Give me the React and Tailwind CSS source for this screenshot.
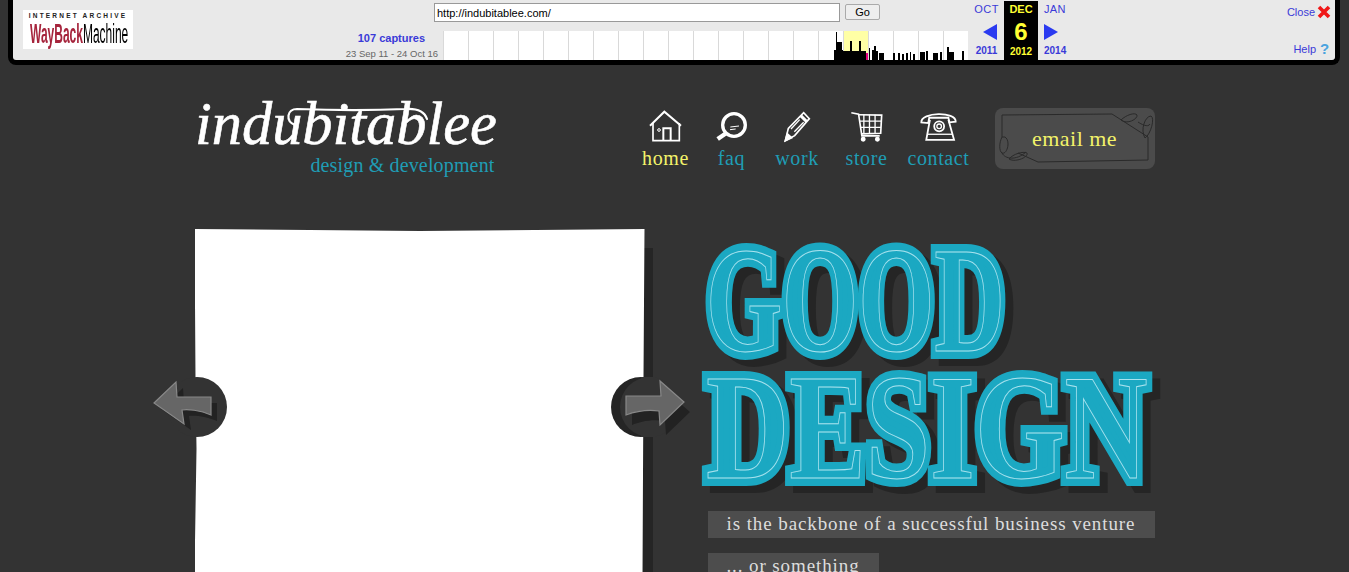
const SANS = "font-['Liberation_Sans',Arial,sans-serif]";

const bars = [
  [834, 3, 50], [836, 1, 32], [837, 5, 42], [842, 1, 50], [843, 7, 51], [850, 2, 41], [852, 7, 51], [859, 2, 41],
  [861, 5, 51], [869, 1, 48], [872, 2, 50], [874, 2, 46], [876, 2, 51], [879, 5, 53], [893, 2, 53], [898, 2, 53],
  [902, 2, 54], [906, 2, 53], [910, 1, 52], [913, 2, 54], [920, 5, 52], [926, 2, 51], [933, 5, 53], [940, 2, 52],
  [947, 2, 47], [949, 5, 52], [962, 2, 51],
];

const navItems = [
  { label: 'home', width: 'w-[66px]', color: 'text-[#f3f36a]', icon: <HomeIcon /> },
  { label: 'faq', width: 'w-[66px]', color: 'text-[#1f9db5]', icon: <FaqIcon /> },
  { label: 'work', width: 'w-[65px]', color: 'text-[#1f9db5]', icon: <WorkIcon /> },
  { label: 'store', width: 'w-[74px]', color: 'text-[#1f9db5]', icon: <StoreIcon /> },
  { label: 'contact', width: 'w-[70px]', color: 'text-[#1f9db5]', icon: <ContactIcon /> },
];

function HomeIcon() {
  return (
    <svg viewBox="54 45 102 99" className="h-[33px] w-[34px]" fill="none" stroke="#fff" strokeWidth="6">
      <path d="M57 92 100 50l50 42" />
      <path d="M66 84v53h79V84" strokeWidth="5" />
      <path d="M97 137v-37h22v37" strokeWidth="6" />
      <circle cx="84" cy="105" r="4" strokeWidth="3" />
    </svg>
  );
}

function FaqIcon() {
  return (
    <svg viewBox="260 45 105 99" className="h-[33px] w-[35px]" fill="none" stroke="#fff">
      <circle cx="320" cy="90" r="34" strokeWidth="10" />
      <path d="M294 116 271 132" strokeWidth="13" />
      <path d="M309 96 335 93M308 104 325 102" strokeWidth="3" />
    </svg>
  );
}

function WorkIcon() {
  return (
    <svg viewBox="465 45 90 99" className="h-[33px] w-[30px]" fill="none" stroke="#fff" strokeWidth="5">
      <path d="M475 137 484 100 530 53 547 71 503 122Z" />
      <path d="M521 62 539 80" strokeWidth="9" />
      <path d="M492 102 518 74M502 110 530 82" strokeWidth="4" />
      <path d="M475 137 481 116 494 128Z" fill="#fff" />
    </svg>
  );
}

function StoreIcon() {
  return (
    <svg viewBox="648 50 100 99" className="h-[33px] w-[33px]" fill="none" stroke="#fff" strokeWidth="5">
      <path d="M652 58 674 62 684 128H738" />
      <path d="M674 64 744 65 741 120 684 122" />
      <path d="M690 64v57M707 64v57M724 64v57M677 83h66M680 102h62" strokeWidth="4" />
      <circle cx="688" cy="138" r="5" fill="#fff" />
      <circle cx="731" cy="138" r="5" fill="#fff" />
    </svg>
  );
}

function ContactIcon() {
  return (
    <svg viewBox="866 52 112 97" className="h-[33px] w-[37px]" fill="none" stroke="#fff" strokeWidth="5.5">
      <path d="M870 88C868 56 976 54 974 86L955 88 952 74H894L891 90Z" />
      <path d="M896 80 885 141H969L952 80" />
      <circle cx="924" cy="100" r="15" />
      <circle cx="924" cy="100" r="7" strokeWidth="4" />
      <path d="M889 124H965" strokeWidth="4" />
    </svg>
  );
}

function Sparkline() {
  return (
    <svg width="525" height="29" className="block">
      <rect width="525" height="29" fill="#fff" />
      <rect x="400" width="25" height="29" fill="#ffffa5" />
      {Array.from({ length: 21 }, (_, i) => (
        <rect key={i} x={i * 25} width="1" height="29" fill="#d9d9d9" />
      ))}
      {bars.map(([x, w, top]) => (
        <rect key={x} x={x - 443} y={top - 31} width={w} height={60 - top} fill="#000" />
      ))}
      <rect x="423" y="22" width="2" height="7" fill="#e6007e" />
    </svg>
  );
}

function Toolbar() {
  return (
    <div className={`ml-2 flex h-[65px] w-[1332px] rounded-b-lg border-x-[5px] border-b-[5px] border-black bg-[#e9e9e9] ${SANS}`}>
      <div className="ml-[10px] mt-[10px] h-[39px] w-[110px] overflow-hidden bg-white text-center">
        <div className="mt-[2px] text-[6.5px] font-bold leading-[8px] tracking-[2.2px] text-[#222]">INTERNET ARCHIVE</div>
        <div className="-ml-[45px] w-[200px] origin-center scale-x-[.48] scale-y-[1.1] whitespace-nowrap text-[25px] font-bold leading-[26px]">
          <span className="text-[#a6243c]">WayBack</span>
          <span className="font-normal text-black">Machine</span>
        </div>
      </div>
      <div className="flex w-[305px] flex-col pt-[31px] text-right">
        <span className="mr-[13px] text-[11px] font-bold leading-[14px] text-[#3a3ad8]">107 captures</span>
        <span className="mt-[3px] text-[9.5px] leading-[12px] text-[#666]">23 Sep 11 - 24 Oct 16</span>
      </div>
      <div className="ml-[5px] w-[525px]">
        <div className="-ml-[9px] flex h-[31px] items-start pt-[3px]">
          <input
            readOnly
            value="http://indubitablee.com/"
            className="h-[19px] w-[406px] border border-[#999] bg-white px-[2px] text-[11px] text-black outline-none"
          />
          <button className="ml-[5px] mt-[1px] h-[16px] w-[35px] rounded-[2px] border border-[#aaa] bg-[#eee] text-[11px] leading-none text-black">Go</button>
        </div>
        <Sparkline />
      </div>
      <div className="flex w-[36px] flex-col items-center text-[#3a3ad8]">
        <span className="ml-[1px] mt-[4px] text-[11px] leading-[11px] tracking-[.5px]">OCT</span>
        <svg width="14" height="16" className="ml-[7px] mt-[9px]"><path d="M0 8 14 0V16Z" fill="#2a3af0" /></svg>
        <span className="ml-[1px] mt-[5px] text-[10px] font-bold leading-[12px]">2011</span>
      </div>
      <div className="mt-[1px] flex h-[59px] w-[34px] flex-col items-center bg-black font-bold text-[#ffff33]">
        <span className="mt-[3px] text-[11px] leading-[11px]">DEC</span>
        <span className="mt-[3px] text-[24px] leading-[28px]">6</span>
        <span className="text-[10px] leading-[12px]">2012</span>
      </div>
      <div className="flex w-[36px] flex-col items-start pl-[6px] text-[#3a3ad8]">
        <span className="mt-[4px] text-[11px] leading-[11px] tracking-[.3px]">JAN</span>
        <svg width="14" height="16" className="mt-[9px]"><path d="M14 8 0 0V16Z" fill="#2a3af0" /></svg>
        <span className="mt-[5px] text-[10px] font-bold leading-[12px]">2014</span>
      </div>
      <div className="flex flex-1 flex-col items-end pr-[4px] text-[11px] text-[#3a3ad8]">
        <div className="mt-[4px] flex items-center gap-[2px]">
          <span>Close</span>
          <svg width="14" height="14" viewBox="0 0 14 14"><path d="M2 2 12 12M12 2 2 12" stroke="#f01818" strokeWidth="3.6" /></svg>
        </div>
        <div className="mt-[20px] flex items-center gap-[2px]">
          <span>Help</span>
          <span className="w-[13px] text-center text-[15px] font-bold leading-[14px] text-[#4aa3df]">?</span>
        </div>
      </div>
    </div>
  );
}

function Header() {
  return (
    <div className="flex h-[164px] items-start">
      <div className="relative mt-[28px] w-[300px]">
        <svg viewBox="0 0 300 40" className="absolute left-0 top-[2px] h-[40px] w-[300px]" fill="none" stroke="#fff" strokeWidth="2.2" strokeLinecap="round">
          <path d="M100 30C90 26 92 14 102 14 130 15 165 16 210 14 224 13 230 18 232 24" />
        </svg>
        <div className="origin-left scale-x-[.99] whitespace-nowrap font-['Liberation_Serif',serif] text-[61px] italic leading-[62px] text-white [-webkit-text-stroke:0.6px_#fff]">
          indubitablee
        </div>
        <div className="-mt-[2px] text-right font-['Liberation_Serif',serif] text-[20px] leading-[24px] tracking-[.15px] text-[#1f9db5]">
          design &amp; development
        </div>
      </div>
      <nav className="ml-[138px] mt-[45px] flex">
        {navItems.map((item) => (
          <a key={item.label} className={`flex flex-col items-center ${item.width}`}>
            {item.icon}
            <span className={`mt-[3px] font-['Liberation_Serif',serif] text-[20px] leading-[24px] tracking-[.6px] ${item.color}`}>{item.label}</span>
          </a>
        ))}
      </nav>
      <div className="relative ml-[21px] mt-[43px] flex h-[61px] w-[160px] items-center justify-center rounded-lg bg-[#4b4b4b]">
        <svg viewBox="0 0 160 61" className="absolute inset-0" fill="none" stroke="#2a2a2a" strokeWidth="1">
          <path d="M7 7 117 6 153 29V52L43 54 23 45M7 7V29" />
          <path d="M126 12c5-5 14-8 16-5 1 4-10 10-16 5zM150 30c-5-8 0-22 6-22 4 2 0 18-6 22zM143 14c3 2 10 6 12 2M7 29c-3 6-3 14 0 16 5 2 9-12 3-16zM14 51c4-5 14-8 18-6 2 4-12 10-18 6zM7 45c3 6 14 8 24-1" />
        </svg>
        <span className="relative font-['Liberation_Serif',serif] text-[22px] leading-none tracking-[.5px] text-[#f3f36a]">email me</span>
      </div>
    </div>
  );
}

function SliderArrows() {
  return (
    <>
      <svg viewBox="0 0 80 70" className="absolute left-[-43px] top-[144px] h-[70px] w-[80px]">
        <circle cx="45" cy="34" r="30" fill="#333" />
        <path d="M4 30 26 9 27 24H60V42C49 37 37 36 32 37L34 51Z" fill="#222" transform="translate(5 6)" />
        <path d="M2 30 24 9 25 24H59V42C48 37 35 36 30 37L32 51Z" fill="#666" stroke="#888" strokeWidth="1.2" />
      </svg>
      <svg viewBox="0 0 100 80" className="absolute left-[416px] top-[139px] h-[80px] w-[100px]">
        <circle cx="30" cy="39" r="30" fill="#252525" />
        <circle cx="39" cy="39" r="30" fill="#333" />
        <rect x="30" y="9" width="14" height="60" fill="#333" />
        <path d="M15 30H50L49 15 73 36 49 59 48 45C33 43 23 46 15 49Z" fill="#222" transform="translate(6 8)" />
        <path d="M15 28H50L49 13 73 34 49 57 48 43C33 41 23 44 15 47Z" fill="#666" stroke="#888" strokeWidth="1.2" />
      </svg>
    </>
  );
}

function Headline() {
  return (
    <h1 className="ml-[3px] h-[274px] font-['Liberation_Serif',serif] text-[150px] font-bold leading-none text-[#1ba8c2] drop-shadow-[8px_7px_0_#252525]">
      <div
        data-label="GOOD"
        className="relative h-[127px] origin-left scale-x-[.652] whitespace-nowrap [-webkit-text-stroke:16px_#1ba8c2] before:absolute before:left-0 before:top-0 before:text-transparent before:content-[attr(data-label)] before:[-webkit-text-stroke:1px_#a8e2ee]"
      >
        GOOD
      </div>
      <div
        data-label="DESIGN"
        className="relative h-[127px] origin-left scale-x-[.768] whitespace-nowrap [-webkit-text-stroke:16px_#1ba8c2] before:absolute before:left-0 before:top-0 before:text-transparent before:content-[attr(data-label)] before:[-webkit-text-stroke:1px_#a8e2ee]"
      >
        DESIGN
      </div>
    </h1>
  );
}

export default function App() {
  return (
    <div className="h-screen overflow-hidden bg-[#333]">
      <Toolbar />
      <main className="mx-auto w-[960px]">
        <Header />
        <section className="flex">
          <div className="relative h-[460px] w-[450px]">
            <div className="absolute bottom-0 left-[448px] top-[19px] w-[10px] bg-[#252525]" />
            <div className="relative h-full bg-white [clip-path:polygon(0_0,50%_2px,100%_0,449px_150px,448px_343px,448px_460px,0_460px,0_343px,2px_220px,1px_150px)]" />
            <SliderArrows />
          </div>
          <div className="ml-[58px] w-[452px]">
            <div className="-mt-[4px]">
              <Headline />
            </div>
            <p className="ml-[5px] mt-[12px] flex h-[27px] items-center justify-center bg-[#4d4d4d] font-['Liberation_Serif',serif] text-[19px] tracking-[.9px] text-[#ddd]">
              is the backbone of a successful business venture
            </p>
            <p className="ml-[5px] mt-[15px] flex h-[27px] w-[171px] items-center justify-center bg-[#4d4d4d] font-['Liberation_Serif',serif] text-[19px] tracking-[.9px] text-[#ddd]">
              ... or something
            </p>
          </div>
        </section>
      </main>
    </div>
  );
}
